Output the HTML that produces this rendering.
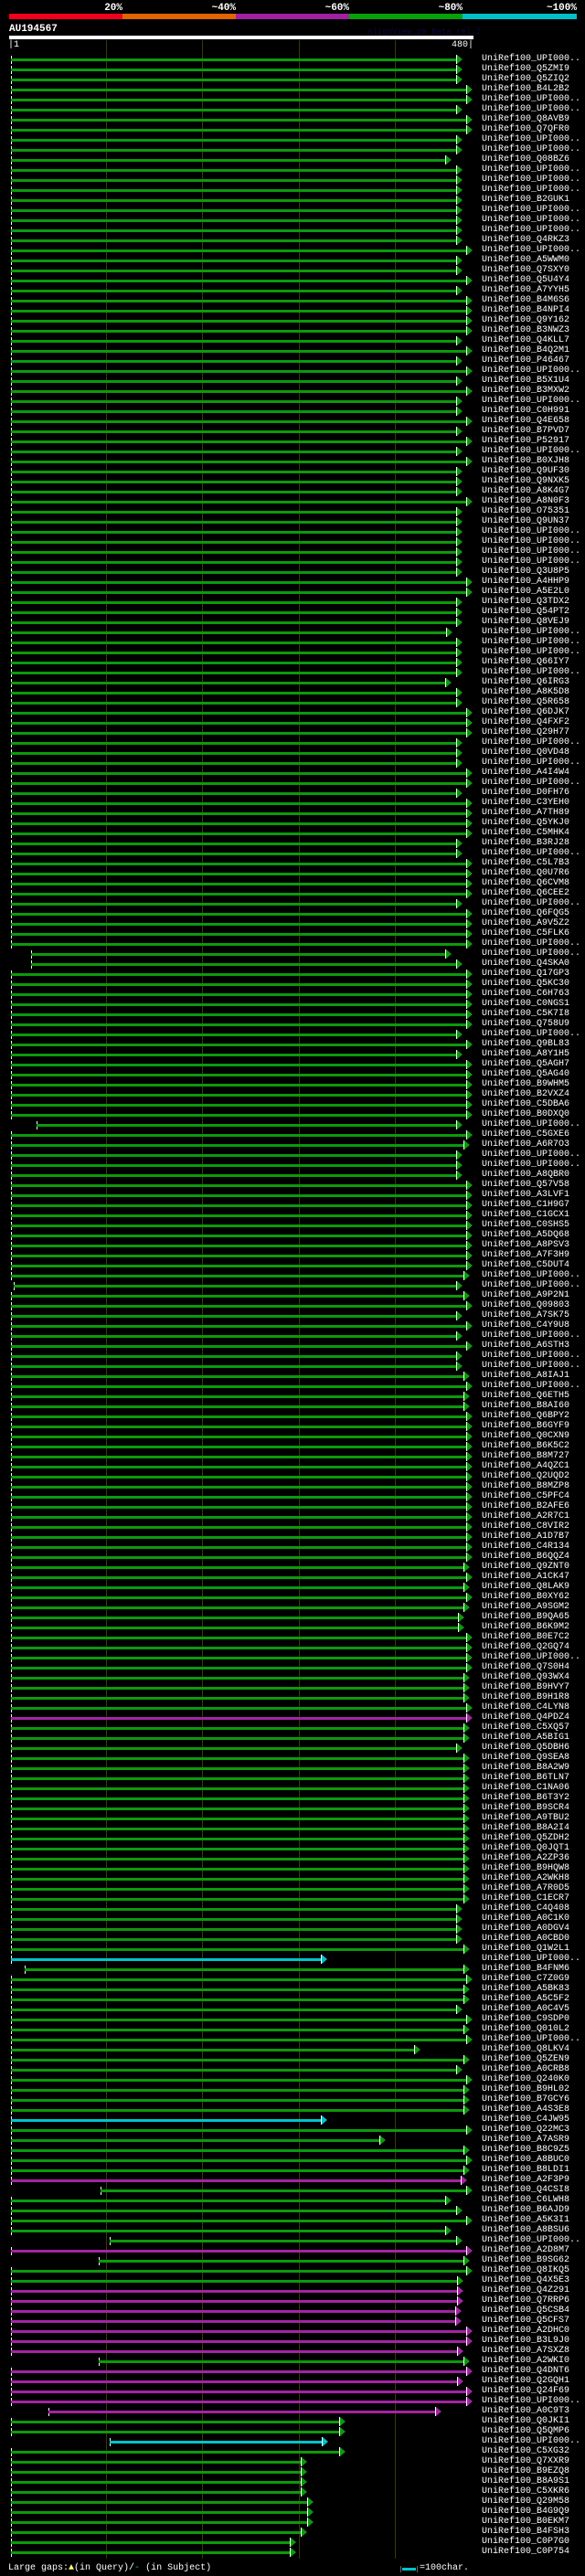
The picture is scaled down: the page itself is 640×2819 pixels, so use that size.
<!DOCTYPE html>
<html><head><meta charset="utf-8"><style>
html,body{margin:0;padding:0;background:#000;}
body{width:640px;height:2819px;position:relative;overflow:hidden;font-family:"Liberation Mono",monospace;color:#fff;}
.p{position:absolute;top:3px;font-weight:bold;font-size:11px;line-height:12px;text-align:right;width:60px}
.cb{position:absolute;top:15px;height:6px}
.g{position:absolute;top:44px;width:1px;height:2756px;background:#3a3a08}
.r{position:absolute;left:0;width:640px;height:11px;--c:#0c9a0c}
.r.m{--c:#a424a4}.r.c{--c:#00c4cc}
.r i{position:absolute;top:4px;height:3px;background:var(--c)}
.r b{position:absolute;top:0;width:0;height:0;border-left:6px solid var(--c);border-top:5px solid transparent;border-bottom:5px solid transparent;box-shadow:-1px 0 0 #fff}
.r u{position:absolute;top:1px;width:1px;height:9px;background:#fff}
.r s{position:absolute;left:527px;top:-1px;text-decoration:none;font-size:10px;line-height:11px;white-space:pre}
</style></head><body>
<div class="p" style="left:74px">20%</div>
<div class="p" style="left:198px">~40%</div>
<div class="p" style="left:322px">~60%</div>
<div class="p" style="left:446px">~80%</div>
<div class="p" style="left:571px">~100%</div>
<div class="cb" style="left:10px;width:124px;background:#f0001c"></div>
<div class="cb" style="left:134px;width:124px;background:#e06400"></div>
<div class="cb" style="left:258px;width:124px;background:#a020a0"></div>
<div class="cb" style="left:382px;width:124px;background:#08a008"></div>
<div class="cb" style="left:506px;width:125px;background:#00c0c8"></div>
<div style="position:absolute;left:10px;top:26px;font-weight:bold;font-size:11px;line-height:12px">AU194567</div>
<div style="position:absolute;left:402px;top:30px;font-size:9px;color:#0a0a40">AlignView.pm Beta rel.7</div>
<div style="position:absolute;left:10px;top:39px;width:508px;height:4px;background:#fff"></div>
<div style="position:absolute;left:9px;top:44px;font-size:10px;line-height:11px">|1</div>
<div style="position:absolute;left:494px;top:44px;font-size:10px;line-height:11px">480|</div>
<div class="g" style="left:116px"></div><div class="g" style="left:221px"></div><div class="g" style="left:327px"></div><div class="g" style="left:432px"></div>

<div class="r" style="top:60px"><u style="left:12px"></u><i style="left:12px;width:488px"></i><b style="left:500px"></b><s>UniRef100_UPI000..</s></div>
<div class="r" style="top:71px"><u style="left:12px"></u><i style="left:12px;width:488px"></i><b style="left:500px"></b><s>UniRef100_Q5ZMI9</s></div>
<div class="r" style="top:82px"><u style="left:12px"></u><i style="left:12px;width:488px"></i><b style="left:500px"></b><s>UniRef100_Q5ZIQ2</s></div>
<div class="r" style="top:93px"><u style="left:12px"></u><i style="left:12px;width:499px"></i><b style="left:511px"></b><s>UniRef100_B4L2B2</s></div>
<div class="r" style="top:104px"><u style="left:12px"></u><i style="left:12px;width:499px"></i><b style="left:511px"></b><s>UniRef100_UPI000..</s></div>
<div class="r" style="top:115px"><u style="left:12px"></u><i style="left:12px;width:488px"></i><b style="left:500px"></b><s>UniRef100_UPI000..</s></div>
<div class="r" style="top:126px"><u style="left:12px"></u><i style="left:12px;width:499px"></i><b style="left:511px"></b><s>UniRef100_Q8AVB9</s></div>
<div class="r" style="top:137px"><u style="left:12px"></u><i style="left:12px;width:499px"></i><b style="left:511px"></b><s>UniRef100_Q7QFR0</s></div>
<div class="r" style="top:148px"><u style="left:12px"></u><i style="left:12px;width:488px"></i><b style="left:500px"></b><s>UniRef100_UPI000..</s></div>
<div class="r" style="top:159px"><u style="left:12px"></u><i style="left:12px;width:488px"></i><b style="left:500px"></b><s>UniRef100_UPI000..</s></div>
<div class="r" style="top:170px"><u style="left:12px"></u><i style="left:12px;width:476px"></i><b style="left:488px"></b><s>UniRef100_Q08BZ6</s></div>
<div class="r" style="top:181px"><u style="left:12px"></u><i style="left:12px;width:488px"></i><b style="left:500px"></b><s>UniRef100_UPI000..</s></div>
<div class="r" style="top:192px"><u style="left:12px"></u><i style="left:12px;width:488px"></i><b style="left:500px"></b><s>UniRef100_UPI000..</s></div>
<div class="r" style="top:203px"><u style="left:12px"></u><i style="left:12px;width:488px"></i><b style="left:500px"></b><s>UniRef100_UPI000..</s></div>
<div class="r" style="top:214px"><u style="left:12px"></u><i style="left:12px;width:488px"></i><b style="left:500px"></b><s>UniRef100_B2GUK1</s></div>
<div class="r" style="top:225px"><u style="left:12px"></u><i style="left:12px;width:488px"></i><b style="left:500px"></b><s>UniRef100_UPI000..</s></div>
<div class="r" style="top:236px"><u style="left:12px"></u><i style="left:12px;width:488px"></i><b style="left:500px"></b><s>UniRef100_UPI000..</s></div>
<div class="r" style="top:247px"><u style="left:12px"></u><i style="left:12px;width:488px"></i><b style="left:500px"></b><s>UniRef100_UPI000..</s></div>
<div class="r" style="top:258px"><u style="left:12px"></u><i style="left:12px;width:488px"></i><b style="left:500px"></b><s>UniRef100_Q4RKZ3</s></div>
<div class="r" style="top:269px"><u style="left:12px"></u><i style="left:12px;width:499px"></i><b style="left:511px"></b><s>UniRef100_UPI000..</s></div>
<div class="r" style="top:280px"><u style="left:12px"></u><i style="left:12px;width:488px"></i><b style="left:500px"></b><s>UniRef100_A5WWM0</s></div>
<div class="r" style="top:291px"><u style="left:12px"></u><i style="left:12px;width:488px"></i><b style="left:500px"></b><s>UniRef100_Q7SXY0</s></div>
<div class="r" style="top:302px"><u style="left:12px"></u><i style="left:12px;width:499px"></i><b style="left:511px"></b><s>UniRef100_Q5U4Y4</s></div>
<div class="r" style="top:313px"><u style="left:12px"></u><i style="left:12px;width:488px"></i><b style="left:500px"></b><s>UniRef100_A7YYH5</s></div>
<div class="r" style="top:324px"><u style="left:12px"></u><i style="left:12px;width:499px"></i><b style="left:511px"></b><s>UniRef100_B4M6S6</s></div>
<div class="r" style="top:335px"><u style="left:12px"></u><i style="left:12px;width:499px"></i><b style="left:511px"></b><s>UniRef100_B4NPI4</s></div>
<div class="r" style="top:346px"><u style="left:12px"></u><i style="left:12px;width:499px"></i><b style="left:511px"></b><s>UniRef100_Q9Y162</s></div>
<div class="r" style="top:357px"><u style="left:12px"></u><i style="left:12px;width:499px"></i><b style="left:511px"></b><s>UniRef100_B3NWZ3</s></div>
<div class="r" style="top:368px"><u style="left:12px"></u><i style="left:12px;width:488px"></i><b style="left:500px"></b><s>UniRef100_Q4KLL7</s></div>
<div class="r" style="top:379px"><u style="left:12px"></u><i style="left:12px;width:499px"></i><b style="left:511px"></b><s>UniRef100_B4Q2M1</s></div>
<div class="r" style="top:390px"><u style="left:12px"></u><i style="left:12px;width:488px"></i><b style="left:500px"></b><s>UniRef100_P46467</s></div>
<div class="r" style="top:401px"><u style="left:12px"></u><i style="left:12px;width:499px"></i><b style="left:511px"></b><s>UniRef100_UPI000..</s></div>
<div class="r" style="top:412px"><u style="left:12px"></u><i style="left:12px;width:488px"></i><b style="left:500px"></b><s>UniRef100_B5X1U4</s></div>
<div class="r" style="top:423px"><u style="left:12px"></u><i style="left:12px;width:499px"></i><b style="left:511px"></b><s>UniRef100_B3MXW2</s></div>
<div class="r" style="top:434px"><u style="left:12px"></u><i style="left:12px;width:488px"></i><b style="left:500px"></b><s>UniRef100_UPI000..</s></div>
<div class="r" style="top:445px"><u style="left:12px"></u><i style="left:12px;width:488px"></i><b style="left:500px"></b><s>UniRef100_C0H991</s></div>
<div class="r" style="top:456px"><u style="left:12px"></u><i style="left:12px;width:499px"></i><b style="left:511px"></b><s>UniRef100_Q4E658</s></div>
<div class="r" style="top:467px"><u style="left:12px"></u><i style="left:12px;width:488px"></i><b style="left:500px"></b><s>UniRef100_B7PVD7</s></div>
<div class="r" style="top:478px"><u style="left:12px"></u><i style="left:12px;width:499px"></i><b style="left:511px"></b><s>UniRef100_P52917</s></div>
<div class="r" style="top:489px"><u style="left:12px"></u><i style="left:12px;width:488px"></i><b style="left:500px"></b><s>UniRef100_UPI000..</s></div>
<div class="r" style="top:500px"><u style="left:12px"></u><i style="left:12px;width:499px"></i><b style="left:511px"></b><s>UniRef100_B0XJH8</s></div>
<div class="r" style="top:511px"><u style="left:12px"></u><i style="left:12px;width:488px"></i><b style="left:500px"></b><s>UniRef100_Q9UF30</s></div>
<div class="r" style="top:522px"><u style="left:12px"></u><i style="left:12px;width:488px"></i><b style="left:500px"></b><s>UniRef100_Q9NXK5</s></div>
<div class="r" style="top:533px"><u style="left:12px"></u><i style="left:12px;width:488px"></i><b style="left:500px"></b><s>UniRef100_A8K4G7</s></div>
<div class="r" style="top:544px"><u style="left:12px"></u><i style="left:12px;width:499px"></i><b style="left:511px"></b><s>UniRef100_A8N0F3</s></div>
<div class="r" style="top:555px"><u style="left:12px"></u><i style="left:12px;width:488px"></i><b style="left:500px"></b><s>UniRef100_O75351</s></div>
<div class="r" style="top:566px"><u style="left:12px"></u><i style="left:12px;width:488px"></i><b style="left:500px"></b><s>UniRef100_Q9UN37</s></div>
<div class="r" style="top:577px"><u style="left:12px"></u><i style="left:12px;width:488px"></i><b style="left:500px"></b><s>UniRef100_UPI000..</s></div>
<div class="r" style="top:588px"><u style="left:12px"></u><i style="left:12px;width:488px"></i><b style="left:500px"></b><s>UniRef100_UPI000..</s></div>
<div class="r" style="top:599px"><u style="left:12px"></u><i style="left:12px;width:488px"></i><b style="left:500px"></b><s>UniRef100_UPI000..</s></div>
<div class="r" style="top:610px"><u style="left:12px"></u><i style="left:12px;width:488px"></i><b style="left:500px"></b><s>UniRef100_UPI000..</s></div>
<div class="r" style="top:621px"><u style="left:12px"></u><i style="left:12px;width:488px"></i><b style="left:500px"></b><s>UniRef100_Q3U8P5</s></div>
<div class="r" style="top:632px"><u style="left:12px"></u><i style="left:12px;width:499px"></i><b style="left:511px"></b><s>UniRef100_A4HHP9</s></div>
<div class="r" style="top:643px"><u style="left:12px"></u><i style="left:12px;width:499px"></i><b style="left:511px"></b><s>UniRef100_A5E2L0</s></div>
<div class="r" style="top:654px"><u style="left:12px"></u><i style="left:12px;width:488px"></i><b style="left:500px"></b><s>UniRef100_Q3TDX2</s></div>
<div class="r" style="top:665px"><u style="left:12px"></u><i style="left:12px;width:488px"></i><b style="left:500px"></b><s>UniRef100_Q54PT2</s></div>
<div class="r" style="top:676px"><u style="left:12px"></u><i style="left:12px;width:488px"></i><b style="left:500px"></b><s>UniRef100_Q8VEJ9</s></div>
<div class="r" style="top:687px"><u style="left:12px"></u><i style="left:12px;width:477px"></i><b style="left:489px"></b><s>UniRef100_UPI000..</s></div>
<div class="r" style="top:698px"><u style="left:12px"></u><i style="left:12px;width:488px"></i><b style="left:500px"></b><s>UniRef100_UPI000..</s></div>
<div class="r" style="top:709px"><u style="left:12px"></u><i style="left:12px;width:488px"></i><b style="left:500px"></b><s>UniRef100_UPI000..</s></div>
<div class="r" style="top:720px"><u style="left:12px"></u><i style="left:12px;width:488px"></i><b style="left:500px"></b><s>UniRef100_Q66IY7</s></div>
<div class="r" style="top:731px"><u style="left:12px"></u><i style="left:12px;width:488px"></i><b style="left:500px"></b><s>UniRef100_UPI000..</s></div>
<div class="r" style="top:742px"><u style="left:12px"></u><i style="left:12px;width:476px"></i><b style="left:488px"></b><s>UniRef100_Q6IRG3</s></div>
<div class="r" style="top:753px"><u style="left:12px"></u><i style="left:12px;width:488px"></i><b style="left:500px"></b><s>UniRef100_A8K5D8</s></div>
<div class="r" style="top:764px"><u style="left:12px"></u><i style="left:12px;width:488px"></i><b style="left:500px"></b><s>UniRef100_Q5R658</s></div>
<div class="r" style="top:775px"><u style="left:12px"></u><i style="left:12px;width:499px"></i><b style="left:511px"></b><s>UniRef100_Q6DJK7</s></div>
<div class="r" style="top:786px"><u style="left:12px"></u><i style="left:12px;width:499px"></i><b style="left:511px"></b><s>UniRef100_Q4FXF2</s></div>
<div class="r" style="top:797px"><u style="left:12px"></u><i style="left:12px;width:499px"></i><b style="left:511px"></b><s>UniRef100_Q29H77</s></div>
<div class="r" style="top:808px"><u style="left:12px"></u><i style="left:12px;width:488px"></i><b style="left:500px"></b><s>UniRef100_UPI000..</s></div>
<div class="r" style="top:819px"><u style="left:12px"></u><i style="left:12px;width:488px"></i><b style="left:500px"></b><s>UniRef100_Q0VD48</s></div>
<div class="r" style="top:830px"><u style="left:12px"></u><i style="left:12px;width:488px"></i><b style="left:500px"></b><s>UniRef100_UPI000..</s></div>
<div class="r" style="top:841px"><u style="left:12px"></u><i style="left:12px;width:499px"></i><b style="left:511px"></b><s>UniRef100_A4I4W4</s></div>
<div class="r" style="top:852px"><u style="left:12px"></u><i style="left:12px;width:499px"></i><b style="left:511px"></b><s>UniRef100_UPI000..</s></div>
<div class="r" style="top:863px"><u style="left:12px"></u><i style="left:12px;width:488px"></i><b style="left:500px"></b><s>UniRef100_D0FH76</s></div>
<div class="r" style="top:874px"><u style="left:12px"></u><i style="left:12px;width:499px"></i><b style="left:511px"></b><s>UniRef100_C3YEH0</s></div>
<div class="r" style="top:885px"><u style="left:12px"></u><i style="left:12px;width:499px"></i><b style="left:511px"></b><s>UniRef100_A7TH89</s></div>
<div class="r" style="top:896px"><u style="left:12px"></u><i style="left:12px;width:499px"></i><b style="left:511px"></b><s>UniRef100_Q5YKJ0</s></div>
<div class="r" style="top:907px"><u style="left:12px"></u><i style="left:12px;width:499px"></i><b style="left:511px"></b><s>UniRef100_C5MHK4</s></div>
<div class="r" style="top:918px"><u style="left:12px"></u><i style="left:12px;width:488px"></i><b style="left:500px"></b><s>UniRef100_B3RJ28</s></div>
<div class="r" style="top:929px"><u style="left:12px"></u><i style="left:12px;width:488px"></i><b style="left:500px"></b><s>UniRef100_UPI000..</s></div>
<div class="r" style="top:940px"><u style="left:12px"></u><i style="left:12px;width:499px"></i><b style="left:511px"></b><s>UniRef100_C5L7B3</s></div>
<div class="r" style="top:951px"><u style="left:12px"></u><i style="left:12px;width:499px"></i><b style="left:511px"></b><s>UniRef100_Q0U7R6</s></div>
<div class="r" style="top:962px"><u style="left:12px"></u><i style="left:12px;width:499px"></i><b style="left:511px"></b><s>UniRef100_Q6CVM8</s></div>
<div class="r" style="top:973px"><u style="left:12px"></u><i style="left:12px;width:499px"></i><b style="left:511px"></b><s>UniRef100_Q6CEE2</s></div>
<div class="r" style="top:984px"><u style="left:12px"></u><i style="left:12px;width:488px"></i><b style="left:500px"></b><s>UniRef100_UPI000..</s></div>
<div class="r" style="top:995px"><u style="left:12px"></u><i style="left:12px;width:499px"></i><b style="left:511px"></b><s>UniRef100_Q6FQG5</s></div>
<div class="r" style="top:1006px"><u style="left:12px"></u><i style="left:12px;width:499px"></i><b style="left:511px"></b><s>UniRef100_A9V5Z2</s></div>
<div class="r" style="top:1017px"><u style="left:12px"></u><i style="left:12px;width:499px"></i><b style="left:511px"></b><s>UniRef100_C5FLK6</s></div>
<div class="r" style="top:1028px"><u style="left:12px"></u><i style="left:12px;width:499px"></i><b style="left:511px"></b><s>UniRef100_UPI000..</s></div>
<div class="r" style="top:1039px"><u style="left:34px"></u><i style="left:34px;width:454px"></i><b style="left:488px"></b><s>UniRef100_UPI000..</s></div>
<div class="r" style="top:1050px"><u style="left:34px"></u><i style="left:34px;width:466px"></i><b style="left:500px"></b><s>UniRef100_Q4SKA0</s></div>
<div class="r" style="top:1061px"><u style="left:12px"></u><i style="left:12px;width:499px"></i><b style="left:511px"></b><s>UniRef100_Q17GP3</s></div>
<div class="r" style="top:1072px"><u style="left:12px"></u><i style="left:12px;width:499px"></i><b style="left:511px"></b><s>UniRef100_Q5KC30</s></div>
<div class="r" style="top:1083px"><u style="left:12px"></u><i style="left:12px;width:499px"></i><b style="left:511px"></b><s>UniRef100_C6H763</s></div>
<div class="r" style="top:1094px"><u style="left:12px"></u><i style="left:12px;width:499px"></i><b style="left:511px"></b><s>UniRef100_C0NGS1</s></div>
<div class="r" style="top:1105px"><u style="left:12px"></u><i style="left:12px;width:499px"></i><b style="left:511px"></b><s>UniRef100_C5K7I8</s></div>
<div class="r" style="top:1116px"><u style="left:12px"></u><i style="left:12px;width:499px"></i><b style="left:511px"></b><s>UniRef100_Q758U9</s></div>
<div class="r" style="top:1127px"><u style="left:12px"></u><i style="left:12px;width:488px"></i><b style="left:500px"></b><s>UniRef100_UPI000..</s></div>
<div class="r" style="top:1138px"><u style="left:12px"></u><i style="left:12px;width:499px"></i><b style="left:511px"></b><s>UniRef100_Q9BL83</s></div>
<div class="r" style="top:1149px"><u style="left:12px"></u><i style="left:12px;width:488px"></i><b style="left:500px"></b><s>UniRef100_A8Y1H5</s></div>
<div class="r" style="top:1160px"><u style="left:12px"></u><i style="left:12px;width:499px"></i><b style="left:511px"></b><s>UniRef100_Q5AGH7</s></div>
<div class="r" style="top:1171px"><u style="left:12px"></u><i style="left:12px;width:499px"></i><b style="left:511px"></b><s>UniRef100_Q5AG40</s></div>
<div class="r" style="top:1182px"><u style="left:12px"></u><i style="left:12px;width:499px"></i><b style="left:511px"></b><s>UniRef100_B9WHM5</s></div>
<div class="r" style="top:1193px"><u style="left:12px"></u><i style="left:12px;width:499px"></i><b style="left:511px"></b><s>UniRef100_B2VXZ4</s></div>
<div class="r" style="top:1204px"><u style="left:12px"></u><i style="left:12px;width:499px"></i><b style="left:511px"></b><s>UniRef100_C5DBA6</s></div>
<div class="r" style="top:1215px"><u style="left:12px"></u><i style="left:12px;width:499px"></i><b style="left:511px"></b><s>UniRef100_B0DXQ0</s></div>
<div class="r" style="top:1226px"><u style="left:40px"></u><i style="left:40px;width:460px"></i><b style="left:500px"></b><s>UniRef100_UPI000..</s></div>
<div class="r" style="top:1237px"><u style="left:12px"></u><i style="left:12px;width:499px"></i><b style="left:511px"></b><s>UniRef100_C5GXE6</s></div>
<div class="r" style="top:1248px"><u style="left:12px"></u><i style="left:12px;width:496px"></i><b style="left:508px"></b><s>UniRef100_A6R7O3</s></div>
<div class="r" style="top:1259px"><u style="left:12px"></u><i style="left:12px;width:488px"></i><b style="left:500px"></b><s>UniRef100_UPI000..</s></div>
<div class="r" style="top:1270px"><u style="left:12px"></u><i style="left:12px;width:488px"></i><b style="left:500px"></b><s>UniRef100_UPI000..</s></div>
<div class="r" style="top:1281px"><u style="left:12px"></u><i style="left:12px;width:488px"></i><b style="left:500px"></b><s>UniRef100_A8QBR0</s></div>
<div class="r" style="top:1292px"><u style="left:12px"></u><i style="left:12px;width:499px"></i><b style="left:511px"></b><s>UniRef100_Q57V58</s></div>
<div class="r" style="top:1303px"><u style="left:12px"></u><i style="left:12px;width:499px"></i><b style="left:511px"></b><s>UniRef100_A3LVF1</s></div>
<div class="r" style="top:1314px"><u style="left:12px"></u><i style="left:12px;width:499px"></i><b style="left:511px"></b><s>UniRef100_C1H9G7</s></div>
<div class="r" style="top:1325px"><u style="left:12px"></u><i style="left:12px;width:499px"></i><b style="left:511px"></b><s>UniRef100_C1GCX1</s></div>
<div class="r" style="top:1336px"><u style="left:12px"></u><i style="left:12px;width:499px"></i><b style="left:511px"></b><s>UniRef100_C0SHS5</s></div>
<div class="r" style="top:1347px"><u style="left:12px"></u><i style="left:12px;width:499px"></i><b style="left:511px"></b><s>UniRef100_A5DQ68</s></div>
<div class="r" style="top:1358px"><u style="left:12px"></u><i style="left:12px;width:499px"></i><b style="left:511px"></b><s>UniRef100_A8PSV3</s></div>
<div class="r" style="top:1369px"><u style="left:12px"></u><i style="left:12px;width:499px"></i><b style="left:511px"></b><s>UniRef100_A7F3H9</s></div>
<div class="r" style="top:1380px"><u style="left:12px"></u><i style="left:12px;width:499px"></i><b style="left:511px"></b><s>UniRef100_C5DUT4</s></div>
<div class="r" style="top:1391px"><u style="left:12px"></u><i style="left:12px;width:496px"></i><b style="left:508px"></b><s>UniRef100_UPI000..</s></div>
<div class="r" style="top:1402px"><u style="left:15px"></u><i style="left:15px;width:485px"></i><b style="left:500px"></b><s>UniRef100_UPI000..</s></div>
<div class="r" style="top:1413px"><u style="left:12px"></u><i style="left:12px;width:496px"></i><b style="left:508px"></b><s>UniRef100_A9P2N1</s></div>
<div class="r" style="top:1424px"><u style="left:12px"></u><i style="left:12px;width:499px"></i><b style="left:511px"></b><s>UniRef100_Q09803</s></div>
<div class="r" style="top:1435px"><u style="left:12px"></u><i style="left:12px;width:488px"></i><b style="left:500px"></b><s>UniRef100_A7SK75</s></div>
<div class="r" style="top:1446px"><u style="left:12px"></u><i style="left:12px;width:499px"></i><b style="left:511px"></b><s>UniRef100_C4Y9U8</s></div>
<div class="r" style="top:1457px"><u style="left:12px"></u><i style="left:12px;width:488px"></i><b style="left:500px"></b><s>UniRef100_UPI000..</s></div>
<div class="r" style="top:1468px"><u style="left:12px"></u><i style="left:12px;width:499px"></i><b style="left:511px"></b><s>UniRef100_A6STH3</s></div>
<div class="r" style="top:1479px"><u style="left:12px"></u><i style="left:12px;width:488px"></i><b style="left:500px"></b><s>UniRef100_UPI000..</s></div>
<div class="r" style="top:1490px"><u style="left:12px"></u><i style="left:12px;width:488px"></i><b style="left:500px"></b><s>UniRef100_UPI000..</s></div>
<div class="r" style="top:1501px"><u style="left:12px"></u><i style="left:12px;width:496px"></i><b style="left:508px"></b><s>UniRef100_A8IAJ1</s></div>
<div class="r" style="top:1512px"><u style="left:12px"></u><i style="left:12px;width:499px"></i><b style="left:511px"></b><s>UniRef100_UPI000..</s></div>
<div class="r" style="top:1523px"><u style="left:12px"></u><i style="left:12px;width:496px"></i><b style="left:508px"></b><s>UniRef100_Q6ETH5</s></div>
<div class="r" style="top:1534px"><u style="left:12px"></u><i style="left:12px;width:496px"></i><b style="left:508px"></b><s>UniRef100_B8AI60</s></div>
<div class="r" style="top:1545px"><u style="left:12px"></u><i style="left:12px;width:499px"></i><b style="left:511px"></b><s>UniRef100_Q6BPY2</s></div>
<div class="r" style="top:1556px"><u style="left:12px"></u><i style="left:12px;width:499px"></i><b style="left:511px"></b><s>UniRef100_B6GYF9</s></div>
<div class="r" style="top:1567px"><u style="left:12px"></u><i style="left:12px;width:499px"></i><b style="left:511px"></b><s>UniRef100_Q0CXN9</s></div>
<div class="r" style="top:1578px"><u style="left:12px"></u><i style="left:12px;width:499px"></i><b style="left:511px"></b><s>UniRef100_B6K5C2</s></div>
<div class="r" style="top:1589px"><u style="left:12px"></u><i style="left:12px;width:499px"></i><b style="left:511px"></b><s>UniRef100_B8M727</s></div>
<div class="r" style="top:1600px"><u style="left:12px"></u><i style="left:12px;width:499px"></i><b style="left:511px"></b><s>UniRef100_A4QZC1</s></div>
<div class="r" style="top:1611px"><u style="left:12px"></u><i style="left:12px;width:499px"></i><b style="left:511px"></b><s>UniRef100_Q2UQD2</s></div>
<div class="r" style="top:1622px"><u style="left:12px"></u><i style="left:12px;width:499px"></i><b style="left:511px"></b><s>UniRef100_B8MZP8</s></div>
<div class="r" style="top:1633px"><u style="left:12px"></u><i style="left:12px;width:499px"></i><b style="left:511px"></b><s>UniRef100_C5PFC4</s></div>
<div class="r" style="top:1644px"><u style="left:12px"></u><i style="left:12px;width:499px"></i><b style="left:511px"></b><s>UniRef100_B2AFE6</s></div>
<div class="r" style="top:1655px"><u style="left:12px"></u><i style="left:12px;width:499px"></i><b style="left:511px"></b><s>UniRef100_A2R7C1</s></div>
<div class="r" style="top:1666px"><u style="left:12px"></u><i style="left:12px;width:499px"></i><b style="left:511px"></b><s>UniRef100_C8VIR2</s></div>
<div class="r" style="top:1677px"><u style="left:12px"></u><i style="left:12px;width:499px"></i><b style="left:511px"></b><s>UniRef100_A1D7B7</s></div>
<div class="r" style="top:1688px"><u style="left:12px"></u><i style="left:12px;width:499px"></i><b style="left:511px"></b><s>UniRef100_C4R134</s></div>
<div class="r" style="top:1699px"><u style="left:12px"></u><i style="left:12px;width:499px"></i><b style="left:511px"></b><s>UniRef100_B6QQZ4</s></div>
<div class="r" style="top:1710px"><u style="left:12px"></u><i style="left:12px;width:496px"></i><b style="left:508px"></b><s>UniRef100_Q9ZNT0</s></div>
<div class="r" style="top:1721px"><u style="left:12px"></u><i style="left:12px;width:499px"></i><b style="left:511px"></b><s>UniRef100_A1CK47</s></div>
<div class="r" style="top:1732px"><u style="left:12px"></u><i style="left:12px;width:496px"></i><b style="left:508px"></b><s>UniRef100_Q8LAK9</s></div>
<div class="r" style="top:1743px"><u style="left:12px"></u><i style="left:12px;width:499px"></i><b style="left:511px"></b><s>UniRef100_B0XY62</s></div>
<div class="r" style="top:1754px"><u style="left:12px"></u><i style="left:12px;width:496px"></i><b style="left:508px"></b><s>UniRef100_A9SGM2</s></div>
<div class="r" style="top:1765px"><u style="left:12px"></u><i style="left:12px;width:490px"></i><b style="left:502px"></b><s>UniRef100_B9QA65</s></div>
<div class="r" style="top:1776px"><u style="left:12px"></u><i style="left:12px;width:490px"></i><b style="left:502px"></b><s>UniRef100_B6K9M2</s></div>
<div class="r" style="top:1787px"><u style="left:12px"></u><i style="left:12px;width:499px"></i><b style="left:511px"></b><s>UniRef100_B0E7C2</s></div>
<div class="r" style="top:1798px"><u style="left:12px"></u><i style="left:12px;width:499px"></i><b style="left:511px"></b><s>UniRef100_Q2GQ74</s></div>
<div class="r" style="top:1809px"><u style="left:12px"></u><i style="left:12px;width:499px"></i><b style="left:511px"></b><s>UniRef100_UPI000..</s></div>
<div class="r" style="top:1820px"><u style="left:12px"></u><i style="left:12px;width:499px"></i><b style="left:511px"></b><s>UniRef100_Q7S0H4</s></div>
<div class="r" style="top:1831px"><u style="left:12px"></u><i style="left:12px;width:496px"></i><b style="left:508px"></b><s>UniRef100_Q93WX4</s></div>
<div class="r" style="top:1842px"><u style="left:12px"></u><i style="left:12px;width:496px"></i><b style="left:508px"></b><s>UniRef100_B9HVY7</s></div>
<div class="r" style="top:1853px"><u style="left:12px"></u><i style="left:12px;width:496px"></i><b style="left:508px"></b><s>UniRef100_B9H1R8</s></div>
<div class="r" style="top:1864px"><u style="left:12px"></u><i style="left:12px;width:499px"></i><b style="left:511px"></b><s>UniRef100_C4LYN8</s></div>
<div class="r m" style="top:1875px"><u style="left:12px"></u><i style="left:12px;width:499px"></i><b style="left:511px"></b><s>UniRef100_Q4PDZ4</s></div>
<div class="r" style="top:1886px"><u style="left:12px"></u><i style="left:12px;width:496px"></i><b style="left:508px"></b><s>UniRef100_C5XQ57</s></div>
<div class="r" style="top:1897px"><u style="left:12px"></u><i style="left:12px;width:496px"></i><b style="left:508px"></b><s>UniRef100_A5BIG1</s></div>
<div class="r" style="top:1908px"><u style="left:12px"></u><i style="left:12px;width:488px"></i><b style="left:500px"></b><s>UniRef100_Q5DBH6</s></div>
<div class="r" style="top:1919px"><u style="left:12px"></u><i style="left:12px;width:496px"></i><b style="left:508px"></b><s>UniRef100_Q9SEA8</s></div>
<div class="r" style="top:1930px"><u style="left:12px"></u><i style="left:12px;width:496px"></i><b style="left:508px"></b><s>UniRef100_B8A2W9</s></div>
<div class="r" style="top:1941px"><u style="left:12px"></u><i style="left:12px;width:496px"></i><b style="left:508px"></b><s>UniRef100_B6TLN7</s></div>
<div class="r" style="top:1952px"><u style="left:12px"></u><i style="left:12px;width:496px"></i><b style="left:508px"></b><s>UniRef100_C1NA06</s></div>
<div class="r" style="top:1963px"><u style="left:12px"></u><i style="left:12px;width:496px"></i><b style="left:508px"></b><s>UniRef100_B6T3Y2</s></div>
<div class="r" style="top:1974px"><u style="left:12px"></u><i style="left:12px;width:496px"></i><b style="left:508px"></b><s>UniRef100_B9SCR4</s></div>
<div class="r" style="top:1985px"><u style="left:12px"></u><i style="left:12px;width:496px"></i><b style="left:508px"></b><s>UniRef100_A9TBU2</s></div>
<div class="r" style="top:1996px"><u style="left:12px"></u><i style="left:12px;width:496px"></i><b style="left:508px"></b><s>UniRef100_B8A2I4</s></div>
<div class="r" style="top:2007px"><u style="left:12px"></u><i style="left:12px;width:496px"></i><b style="left:508px"></b><s>UniRef100_Q5ZDH2</s></div>
<div class="r" style="top:2018px"><u style="left:12px"></u><i style="left:12px;width:496px"></i><b style="left:508px"></b><s>UniRef100_Q0JQT1</s></div>
<div class="r" style="top:2029px"><u style="left:12px"></u><i style="left:12px;width:496px"></i><b style="left:508px"></b><s>UniRef100_A2ZP36</s></div>
<div class="r" style="top:2040px"><u style="left:12px"></u><i style="left:12px;width:496px"></i><b style="left:508px"></b><s>UniRef100_B9HQW8</s></div>
<div class="r" style="top:2051px"><u style="left:12px"></u><i style="left:12px;width:496px"></i><b style="left:508px"></b><s>UniRef100_A2WKH8</s></div>
<div class="r" style="top:2062px"><u style="left:12px"></u><i style="left:12px;width:496px"></i><b style="left:508px"></b><s>UniRef100_A7R0D5</s></div>
<div class="r" style="top:2073px"><u style="left:12px"></u><i style="left:12px;width:496px"></i><b style="left:508px"></b><s>UniRef100_C1ECR7</s></div>
<div class="r" style="top:2084px"><u style="left:12px"></u><i style="left:12px;width:488px"></i><b style="left:500px"></b><s>UniRef100_C4Q408</s></div>
<div class="r" style="top:2095px"><u style="left:12px"></u><i style="left:12px;width:488px"></i><b style="left:500px"></b><s>UniRef100_A0C1K0</s></div>
<div class="r" style="top:2106px"><u style="left:12px"></u><i style="left:12px;width:488px"></i><b style="left:500px"></b><s>UniRef100_A0DGV4</s></div>
<div class="r" style="top:2117px"><u style="left:12px"></u><i style="left:12px;width:488px"></i><b style="left:500px"></b><s>UniRef100_A0CBD0</s></div>
<div class="r" style="top:2128px"><u style="left:12px"></u><i style="left:12px;width:496px"></i><b style="left:508px"></b><s>UniRef100_Q1W2L1</s></div>
<div class="r c" style="top:2139px"><u style="left:12px"></u><i style="left:12px;width:340px"></i><b style="left:352px"></b><s>UniRef100_UPI000..</s></div>
<div class="r" style="top:2150px"><u style="left:27px"></u><i style="left:27px;width:481px"></i><b style="left:508px"></b><s>UniRef100_B4FNM6</s></div>
<div class="r" style="top:2161px"><u style="left:12px"></u><i style="left:12px;width:499px"></i><b style="left:511px"></b><s>UniRef100_C7Z0G9</s></div>
<div class="r" style="top:2172px"><u style="left:12px"></u><i style="left:12px;width:496px"></i><b style="left:508px"></b><s>UniRef100_A5BK83</s></div>
<div class="r" style="top:2183px"><u style="left:12px"></u><i style="left:12px;width:496px"></i><b style="left:508px"></b><s>UniRef100_A5C5F2</s></div>
<div class="r" style="top:2194px"><u style="left:12px"></u><i style="left:12px;width:488px"></i><b style="left:500px"></b><s>UniRef100_A0C4V5</s></div>
<div class="r" style="top:2205px"><u style="left:12px"></u><i style="left:12px;width:499px"></i><b style="left:511px"></b><s>UniRef100_C9SDP0</s></div>
<div class="r" style="top:2216px"><u style="left:12px"></u><i style="left:12px;width:496px"></i><b style="left:508px"></b><s>UniRef100_Q010L2</s></div>
<div class="r" style="top:2227px"><u style="left:12px"></u><i style="left:12px;width:499px"></i><b style="left:511px"></b><s>UniRef100_UPI000..</s></div>
<div class="r" style="top:2238px"><u style="left:12px"></u><i style="left:12px;width:442px"></i><b style="left:454px"></b><s>UniRef100_Q8LKV4</s></div>
<div class="r" style="top:2249px"><u style="left:12px"></u><i style="left:12px;width:496px"></i><b style="left:508px"></b><s>UniRef100_Q5ZEN9</s></div>
<div class="r" style="top:2260px"><u style="left:12px"></u><i style="left:12px;width:488px"></i><b style="left:500px"></b><s>UniRef100_A0CRB8</s></div>
<div class="r" style="top:2271px"><u style="left:12px"></u><i style="left:12px;width:499px"></i><b style="left:511px"></b><s>UniRef100_Q240K0</s></div>
<div class="r" style="top:2282px"><u style="left:12px"></u><i style="left:12px;width:496px"></i><b style="left:508px"></b><s>UniRef100_B9HL02</s></div>
<div class="r" style="top:2293px"><u style="left:12px"></u><i style="left:12px;width:496px"></i><b style="left:508px"></b><s>UniRef100_B7GCY6</s></div>
<div class="r" style="top:2304px"><u style="left:12px"></u><i style="left:12px;width:496px"></i><b style="left:508px"></b><s>UniRef100_A4S3E8</s></div>
<div class="r c" style="top:2315px"><u style="left:12px"></u><i style="left:12px;width:340px"></i><b style="left:352px"></b><s>UniRef100_C4JW95</s></div>
<div class="r" style="top:2326px"><u style="left:12px"></u><i style="left:12px;width:499px"></i><b style="left:511px"></b><s>UniRef100_Q22MC3</s></div>
<div class="r" style="top:2337px"><u style="left:12px"></u><i style="left:12px;width:404px"></i><b style="left:416px"></b><s>UniRef100_A7ASR9</s></div>
<div class="r" style="top:2348px"><u style="left:12px"></u><i style="left:12px;width:496px"></i><b style="left:508px"></b><s>UniRef100_B8C9Z5</s></div>
<div class="r" style="top:2359px"><u style="left:12px"></u><i style="left:12px;width:499px"></i><b style="left:511px"></b><s>UniRef100_A8BUC0</s></div>
<div class="r" style="top:2370px"><u style="left:12px"></u><i style="left:12px;width:496px"></i><b style="left:508px"></b><s>UniRef100_B8LDI1</s></div>
<div class="r m" style="top:2381px"><u style="left:12px"></u><i style="left:12px;width:493px"></i><b style="left:505px"></b><s>UniRef100_A2F3P9</s></div>
<div class="r" style="top:2392px"><u style="left:110px"></u><i style="left:110px;width:401px"></i><b style="left:511px"></b><s>UniRef100_Q4CSI8</s></div>
<div class="r" style="top:2403px"><u style="left:12px"></u><i style="left:12px;width:476px"></i><b style="left:488px"></b><s>UniRef100_C6LWH8</s></div>
<div class="r" style="top:2414px"><u style="left:12px"></u><i style="left:12px;width:488px"></i><b style="left:500px"></b><s>UniRef100_B6AJD9</s></div>
<div class="r" style="top:2425px"><u style="left:12px"></u><i style="left:12px;width:499px"></i><b style="left:511px"></b><s>UniRef100_A5K3I1</s></div>
<div class="r" style="top:2436px"><u style="left:12px"></u><i style="left:12px;width:476px"></i><b style="left:488px"></b><s>UniRef100_A8BSU6</s></div>
<div class="r" style="top:2447px"><u style="left:120px"></u><i style="left:120px;width:380px"></i><b style="left:500px"></b><s>UniRef100_UPI000..</s></div>
<div class="r m" style="top:2458px"><u style="left:12px"></u><i style="left:12px;width:499px"></i><b style="left:511px"></b><s>UniRef100_A2D8M7</s></div>
<div class="r" style="top:2469px"><u style="left:108px"></u><i style="left:108px;width:400px"></i><b style="left:508px"></b><s>UniRef100_B9SG62</s></div>
<div class="r" style="top:2480px"><u style="left:12px"></u><i style="left:12px;width:499px"></i><b style="left:511px"></b><s>UniRef100_Q8IKQ5</s></div>
<div class="r" style="top:2491px"><u style="left:12px"></u><i style="left:12px;width:489px"></i><b style="left:501px"></b><s>UniRef100_Q4X5E3</s></div>
<div class="r m" style="top:2502px"><u style="left:12px"></u><i style="left:12px;width:489px"></i><b style="left:501px"></b><s>UniRef100_Q4Z291</s></div>
<div class="r m" style="top:2513px"><u style="left:12px"></u><i style="left:12px;width:489px"></i><b style="left:501px"></b><s>UniRef100_Q7RRP6</s></div>
<div class="r m" style="top:2524px"><u style="left:12px"></u><i style="left:12px;width:487px"></i><b style="left:499px"></b><s>UniRef100_Q5CSB4</s></div>
<div class="r m" style="top:2535px"><u style="left:12px"></u><i style="left:12px;width:487px"></i><b style="left:499px"></b><s>UniRef100_Q5CFS7</s></div>
<div class="r m" style="top:2546px"><u style="left:12px"></u><i style="left:12px;width:499px"></i><b style="left:511px"></b><s>UniRef100_A2DHC0</s></div>
<div class="r m" style="top:2557px"><u style="left:12px"></u><i style="left:12px;width:499px"></i><b style="left:511px"></b><s>UniRef100_B3L9J0</s></div>
<div class="r m" style="top:2568px"><u style="left:12px"></u><i style="left:12px;width:489px"></i><b style="left:501px"></b><s>UniRef100_A7SXZ8</s></div>
<div class="r" style="top:2579px"><u style="left:108px"></u><i style="left:108px;width:400px"></i><b style="left:508px"></b><s>UniRef100_A2WKI0</s></div>
<div class="r m" style="top:2590px"><u style="left:12px"></u><i style="left:12px;width:499px"></i><b style="left:511px"></b><s>UniRef100_Q4DNT6</s></div>
<div class="r m" style="top:2601px"><u style="left:12px"></u><i style="left:12px;width:489px"></i><b style="left:501px"></b><s>UniRef100_Q2GQH1</s></div>
<div class="r m" style="top:2612px"><u style="left:12px"></u><i style="left:12px;width:499px"></i><b style="left:511px"></b><s>UniRef100_Q24F69</s></div>
<div class="r m" style="top:2623px"><u style="left:12px"></u><i style="left:12px;width:499px"></i><b style="left:511px"></b><s>UniRef100_UPI000..</s></div>
<div class="r m" style="top:2634px"><u style="left:53px"></u><i style="left:53px;width:424px"></i><b style="left:477px"></b><s>UniRef100_A0C9T3</s></div>
<div class="r" style="top:2645px"><u style="left:12px"></u><i style="left:12px;width:360px"></i><b style="left:372px"></b><s>UniRef100_Q0JKI1</s></div>
<div class="r" style="top:2656px"><u style="left:12px"></u><i style="left:12px;width:360px"></i><b style="left:372px"></b><s>UniRef100_Q5QMP6</s></div>
<div class="r c" style="top:2667px"><u style="left:120px"></u><i style="left:120px;width:233px"></i><b style="left:353px"></b><s>UniRef100_UPI000..</s></div>
<div class="r" style="top:2678px"><u style="left:12px"></u><i style="left:12px;width:360px"></i><b style="left:372px"></b><s>UniRef100_C5XG32</s></div>
<div class="r" style="top:2689px"><u style="left:12px"></u><i style="left:12px;width:318px"></i><b style="left:330px"></b><s>UniRef100_Q7XXR9</s></div>
<div class="r" style="top:2700px"><u style="left:12px"></u><i style="left:12px;width:318px"></i><b style="left:330px"></b><s>UniRef100_B9EZQ8</s></div>
<div class="r" style="top:2711px"><u style="left:12px"></u><i style="left:12px;width:318px"></i><b style="left:330px"></b><s>UniRef100_B8A9S1</s></div>
<div class="r" style="top:2722px"><u style="left:12px"></u><i style="left:12px;width:318px"></i><b style="left:330px"></b><s>UniRef100_C5XKR6</s></div>
<div class="r" style="top:2733px"><u style="left:12px"></u><i style="left:12px;width:325px"></i><b style="left:337px"></b><s>UniRef100_Q29M58</s></div>
<div class="r" style="top:2744px"><u style="left:12px"></u><i style="left:12px;width:325px"></i><b style="left:337px"></b><s>UniRef100_B4G9Q9</s></div>
<div class="r" style="top:2755px"><u style="left:12px"></u><i style="left:12px;width:325px"></i><b style="left:337px"></b><s>UniRef100_B0EKM7</s></div>
<div class="r" style="top:2766px"><u style="left:12px"></u><i style="left:12px;width:318px"></i><b style="left:330px"></b><s>UniRef100_B4FSH3</s></div>
<div class="r" style="top:2777px"><u style="left:12px"></u><i style="left:12px;width:306px"></i><b style="left:318px"></b><s>UniRef100_C0P7G0</s></div>
<div class="r" style="top:2788px"><u style="left:12px"></u><i style="left:12px;width:306px"></i><b style="left:318px"></b><s>UniRef100_C0P754</s></div>

<div style="position:absolute;left:9px;top:2805px;font-size:10px;line-height:11px;white-space:pre">Large gaps:<span style="color:#ffff80">&#9650;</span>(in Query)/<span style="color:#00c4cc">-</span> (in Subject)</div>
<div style="position:absolute;left:438px;top:2808px;width:1px;height:7px;background:#666"></div>
<div style="position:absolute;left:440px;top:2810px;width:15px;height:3px;background:#00c4cc"></div>
<div style="position:absolute;left:456px;top:2808px;width:1px;height:7px;background:#666"></div>
<div style="position:absolute;left:459px;top:2805px;font-size:10px;line-height:11px">=100char.</div>
</body></html>
